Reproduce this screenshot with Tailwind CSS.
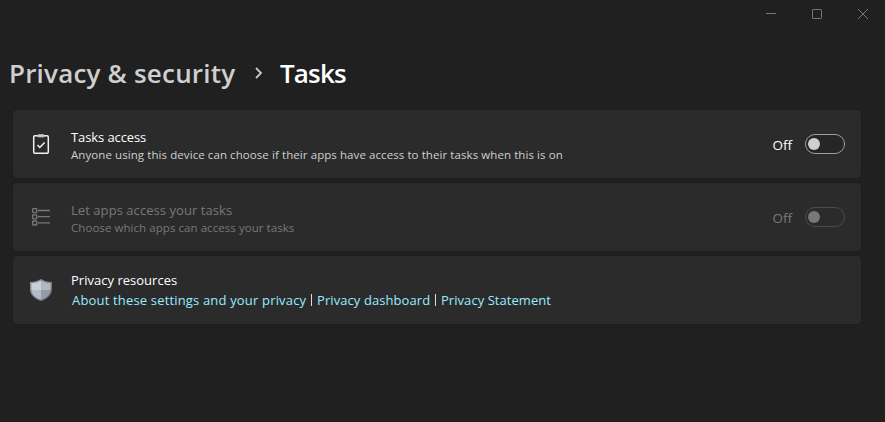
<!DOCTYPE html>
<html lang="en">
<head>
<meta charset="utf-8">
<title>Tasks</title>
<script src="https://cdn.jsdelivr.net/npm/@tailwindcss/browser@4"></script>
</head>
<body class="bg-[#202020] text-white font-['Open_Sans','Noto_Sans',sans-serif] w-[885px] h-[422px] overflow-hidden">
<header class="flex h-7 justify-end gap-[34px] pr-4 pt-2 text-[#777]">
  <svg class="size-3" viewBox="0 0 12 12" fill="none" stroke="currentColor"><path d="M1 5.5h10"/></svg>
  <svg class="size-3" viewBox="0 0 12 12" fill="none" stroke="currentColor"><rect x="1.5" y="1.5" width="9" height="9" rx=".6"/></svg>
  <svg class="size-3" viewBox="0 0 12 12" fill="none" stroke="currentColor"><path d="M1 1l10 10M11 1L1 11"/></svg>
</header>
<nav class="flex h-[82px] items-center pl-[9px] pt-[7px] text-[26px] leading-9 font-semibold whitespace-nowrap">
  <span class="w-[245px] text-[#cfcfcf] tracking-[0.2px]">Privacy &amp; security</span>
  <svg class="h-3 w-[10px] mr-[16px]" viewBox="0 0 10 12" fill="none" stroke="#c8c8c8" stroke-width="1.8"><path d="M2 1l5 5-5 5"/></svg>
  <h1 class="tracking-[-0.85px]">Tasks</h1>
</nav>
<main class="flex flex-col gap-[5px] pl-[13px] w-[861px] whitespace-nowrap">
  <section class="flex h-[68px] items-center rounded bg-[#2b2b2b] shadow-[0_0_0_1px_#1d1d1d] pl-[18px] pr-4">
    <svg class="size-5" viewBox="0 0 20 20" fill="none" stroke="#f2f2f2" stroke-width="1.5"><rect x="2.7" y="1.7" width="14.6" height="17.6" rx="1.3"/><rect x="6.5" y="0.8" width="7" height="2" rx="1" fill="#ccc" stroke="#ccc" stroke-width="1"/><path d="M6.5 11l2.3 2.4 4.8-5"/></svg>
    <div class="ml-5 grow pt-[3px]">
      <h2 class="text-[13px] leading-[18px] tracking-[-0.1px]">Tasks access</h2>
      <p class="text-[11.5px] leading-[17px] text-[#cfcfcf] tracking-[0.08px]">Anyone using this device can choose if their apps have access to their tasks when this is on</p>
    </div>
    <span class="mt-[2px] mr-[13px] text-[13.5px]">Off</span>
    <span class="flex h-5 w-10 items-center rounded-full border border-[#9e9e9e] bg-[#262626] pl-[2px]"><i class="size-3 rounded-full bg-[#cfcfcf]"></i></span>
  </section>
  <section class="flex h-[68px] items-center rounded bg-[#2b2b2b] shadow-[0_0_0_1px_#1d1d1d] pl-[18px] pr-4 text-[#787878]">
    <svg class="size-5" viewBox="0 0 20 20" fill="none" stroke="currentColor" stroke-width="1.3"><rect x="1.7" y="1.6" width="4" height="4" rx=".5"/><rect x="1.7" y="7.8" width="4" height="4" rx=".5"/><rect x="1.7" y="14" width="4" height="4" rx=".5"/><path d="M7 3.5h12M7 9.7h12M7 15.9h12"/></svg>
    <div class="ml-5 grow pt-[3px]">
      <h2 class="text-[13px] leading-[18px] tracking-[0.06px]">Let apps access your tasks</h2>
      <p class="text-[11.5px] leading-[17px] tracking-[0.06px]">Choose which apps can access your tasks</p>
    </div>
    <span class="mt-[2px] mr-[13px] text-[13.5px]">Off</span>
    <span class="flex h-5 w-10 items-center rounded-full border border-[#4c4c4c] pl-[2px]"><i class="size-3 rounded-full bg-[#787878]"></i></span>
  </section>
  <section class="flex h-[68px] items-center rounded bg-[#2b2b2b] shadow-[0_0_0_1px_#1d1d1d] pl-4 pr-4">
    <svg class="h-[22px] w-6" viewBox="0 0 24 22"><defs><linearGradient id="rim" x2="1" y2="1"><stop stop-color="#929ba5"/><stop offset="1" stop-color="#606c79"/></linearGradient></defs><path d="M12 0C9 2 5 3 1 3v7c0 6 5 10 11 12 6-2 11-6 11-12V3C19 3 15 2 12 0z" fill="url(#rim)"/><path d="M12 1.4C9 3.3 6 4 2.5 4.2V11H12z" fill="#c9cfd6"/><path d="M12 1.4c3 1.9 6 2.6 9.5 2.8V11H12z" fill="#b0b8c1"/><path d="M2.5 11c.4 5 4.500 8 9.500 9.700V11z" fill="#b5bdc6"/><path d="M21.500 11c-.4 5-4.500 8-9.500 9.700V11z" fill="#929ca7"/></svg>
    <div class="ml-[18px]">
      <h2 class="text-[13px] leading-5 tracking-[0.02px]">Privacy resources</h2>
      <div class="flex items-center pl-px text-[13px] leading-5 text-[#99ebff]">
        <a class="w-[239px] tracking-[0.17px]">About these settings and your privacy</a><i class="mr-[5px] h-3 w-px bg-[#ddd]"></i>
        <a class="w-[118px] tracking-[0.08px]">Privacy dashboard</a><i class="mr-[5px] h-3 w-px bg-[#ddd]"></i>
        <a class="tracking-[0.05px]">Privacy Statement</a>
      </div>
    </div>
  </section>
</main>
</body>
</html>
